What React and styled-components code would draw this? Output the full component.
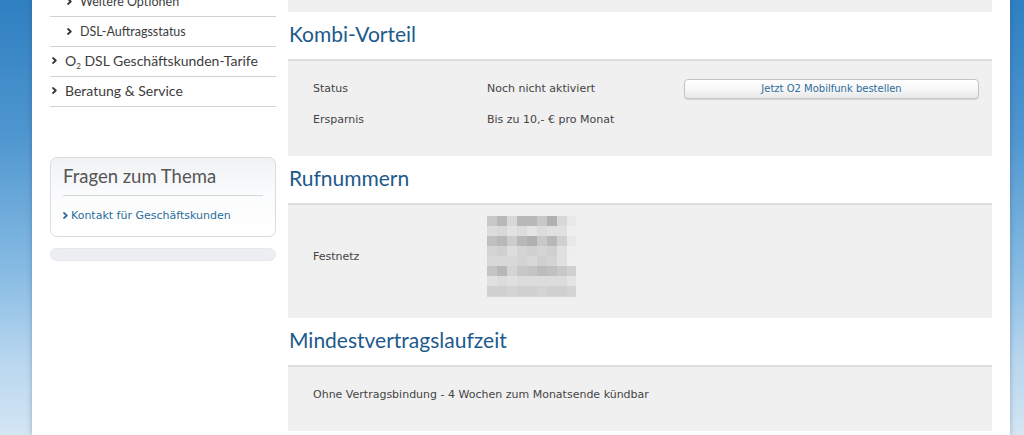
import React from "react";
import styled, { createGlobalStyle } from "styled-components";

const Global = createGlobalStyle`
  html, body { margin: 0; padding: 0; }
  body {
    background: linear-gradient(to bottom, #2f7fc1 0%, #4d95cf 30%, #86bbe3 62%, #b6d5ee 82%, #d3e6f4 100%);
    min-height: 435px;
  }
`;

const Viewport = styled.div`
  height: 435px;
  overflow: hidden;
  display: flex;
  padding-left: 32px;
`;

const Page = styled.div`
  width: 978px;
  background: #fff;
  box-shadow: 0 0 5px rgba(40, 60, 90, 0.35);
  display: flex;
  gap: 12px;
  padding: 0 18px;
  box-sizing: border-box;
  align-items: flex-start;
`;

const Sidebar = styled.aside`
  width: 226px;
  flex: none;
  display: flex;
  flex-direction: column;
`;

const NavRow = styled.div`
  height: 29px;
  box-sizing: content-box;
  border-bottom: 1px solid #d2d2d2;
  display: flex;
  align-items: center;
  gap: 8px;
  padding-left: ${(p) => (p.$sub ? "17px" : "2px")};
  padding-bottom: 0;
  font-family: Lato, "Open Sans", sans-serif;
  font-size: ${(p) => (p.$sub ? "12.5px" : "14px")};
  color: #3d3d3d;
  white-space: nowrap;
`;

const NavLabel = styled.span`
  display: flex;
  align-items: center;
  gap: 8px;
  margin-bottom: ${(p) => (p.$sub ? "1px" : "3px")};
`;

const ClippedRow = styled(NavRow)`
  height: 16px;
  align-items: flex-end;
  overflow: hidden;
`;

const ClipInner = styled.div`
  height: 30px;
  flex: none;
  display: flex;
  align-items: center;
  gap: 8px;
`;

const Sub = styled.sub`
  font-size: 8px;
  vertical-align: -3px;
  line-height: 0;
`;

const Chevron = ({ color = "#333", w = 5, h = 7 }) => (
  <svg width={w} height={h} viewBox="0 0 5 7" style={{ flex: "none" }}>
    <path d="M1 1 L3.8 3.5 L1 6" fill="none" stroke={color} strokeWidth="1.7" strokeLinecap="round" strokeLinejoin="round" />
  </svg>
);

const InfoBox = styled.div`
  margin-top: 50px;
  border: 1px solid #dcdcdc;
  border-radius: 7px;
  background: linear-gradient(to bottom, #f1f2f4 0%, #fafbfc 45%, #ffffff 100%);
  padding: 0 12px;
  height: 78px;
  display: flex;
  flex-direction: column;
`;

const InfoTitle = styled.div`
  font-family: Lato, "Open Sans", sans-serif;
  font-size: 18.5px;
  color: #555;
  height: 37px;
  line-height: 37px;
  padding-left: 0;
  border-bottom: 1px solid #d6d6d6;
`;

const InfoLink = styled.a`
  display: flex;
  align-items: center;
  gap: 3px;
  height: 38px;
  font-family: "DejaVu Sans", Verdana, sans-serif;
  font-size: 11px;
  color: #2b6d9d;
  text-decoration: none;
`;

const Bar = styled.div`
  margin-top: 11px;
  height: 13px;
  border-radius: 7px;
  background: #eceef1;
  border: 1px solid #e6e8eb;
  box-sizing: border-box;
`;

const Main = styled.main`
  width: 704px;
  flex: none;
  display: flex;
  flex-direction: column;
`;

const Panel = styled.div`
  background: #f0f0f0;
  border-top: ${(p) => (p.$noBorder ? "none" : "2px solid #dedede")};
  padding: ${(p) => p.$pad || "12px 0 21px"};
  height: ${(p) => p.$h || "auto"};
  box-sizing: border-box;
  display: flex;
  flex-direction: column;
`;

const Heading = styled.h2`
  margin: 0;
  height: 47px;
  line-height: 43px;
  font-family: Lato, "Open Sans", sans-serif;
  font-weight: 400;
  font-size: 21px;
  color: #1d5a8c;
  padding-left: 1px;
`;

const Row = styled.div`
  display: grid;
  grid-template-columns: 174px 197px 1fr;
  align-items: center;
  min-height: 31px;
  padding: 0 13px 0 25px;
  font-family: "DejaVu Sans", Verdana, sans-serif;
  font-size: 11px;
  color: #444;
`;

const Text = styled.div`
  padding: 0 25px;
  height: 31px;
  line-height: 31px;
  font-family: "DejaVu Sans", Verdana, sans-serif;
  font-size: 11px;
  color: #444;
`;

const Button = styled.button`
  height: 20px;
  border: 1px solid #c4c4c4;
  border-radius: 4px;
  background: linear-gradient(to bottom, #ffffff 0%, #f7f7f7 50%, #e8e8e8 100%);
  box-shadow: 0 1px 1px rgba(0, 0, 0, 0.12);
  font-family: "DejaVu Sans", Verdana, sans-serif;
  font-size: 10px;
  color: #2b6d9d;
  padding: 0;
  cursor: pointer;
`;

const Blur = styled.div`
  display: grid;
  grid-template-columns: repeat(9, 10px);
  grid-auto-rows: 10px;
  width: 89px;
  overflow: hidden;
  height: 81px;
`;

const Cell = styled.div`
  background: ${(p) => p.$c};
`;

const blurData = [
  ["c8", "b8", "d8", "b8", "b8", "c8", "b0", "d8", "e8"],
  ["dc", "d8", "e2", "dc", "e4", "dc", "e0", "e0", "ee"],
  ["c0", "b8", "cc", "b8", "b0", "c8", "b8", "d0", "e8"],
  ["d4", "d0", "dc", "d4", "d0", "d4", "d0", "e0", "ee"],
  ["d8", "d8", "d8", "d4", "d8", "d0", "d4", "e0", "f0"],
  ["c4", "b8", "d4", "c8", "c4", "bc", "c0", "c8", "d0"],
  ["e0", "dc", "e0", "dc", "dc", "dc", "dc", "dc", "e4"],
  ["d0", "d0", "d4", "d0", "d0", "d4", "d0", "d0", "d4"],
  ["d6", "d6", "d6", "d6", "d6", "d6", "d6", "d6", "d6"],
];

export default function App() {
  return (
    <>
      <Global />
      <Viewport>
        <Page>
          <Sidebar>
            <ClippedRow $sub>
              <ClipInner>
                <Chevron />
                <span>Weitere Optionen</span>
              </ClipInner>
            </ClippedRow>
            <NavRow $sub>
              <NavLabel $sub>
                <Chevron />
                <span>DSL-Auftragsstatus</span>
              </NavLabel>
            </NavRow>
            <NavRow>
              <NavLabel>
                <Chevron />
                <span>
                  O<Sub>2</Sub> DSL Geschäftskunden-Tarife
                </span>
              </NavLabel>
            </NavRow>
            <NavRow>
              <NavLabel>
                <Chevron />
                <span>Beratung &amp; Service</span>
              </NavLabel>
            </NavRow>
            <InfoBox>
              <InfoTitle>Fragen zum Thema</InfoTitle>
              <InfoLink href="#">
                <Chevron color="#2b6d9d" />
                Kontakt für Geschäftskunden
              </InfoLink>
            </InfoBox>
            <Bar />
          </Sidebar>
          <Main>
            <Panel $noBorder $pad="0" $h="12px" />
            <Heading>Kombi-Vorteil</Heading>
            <Panel>
              <Row>
                <span>Status</span>
                <span>Noch nicht aktiviert</span>
                <Button>Jetzt O2 Mobilfunk bestellen</Button>
              </Row>
              <Row>
                <span>Ersparnis</span>
                <span>Bis zu 10,- € pro Monat</span>
              </Row>
            </Panel>
            <Heading>Rufnummern</Heading>
            <Panel $pad="11px 0 21px">
              <Row>
                <span>Festnetz</span>
                <Blur>
                  {blurData.flat().map((c, i) => (
                    <Cell key={i} $c={`#${c}${c}${c}`.slice(0, 7)} />
                  ))}
                </Blur>
              </Row>
            </Panel>
            <Heading>Mindestvertragslaufzeit</Heading>
            <Panel>
              <Text>Ohne Vertragsbindung - 4 Wochen zum Monatsende kündbar</Text>
            </Panel>
          </Main>
        </Page>
      </Viewport>
    </>
  );
}
